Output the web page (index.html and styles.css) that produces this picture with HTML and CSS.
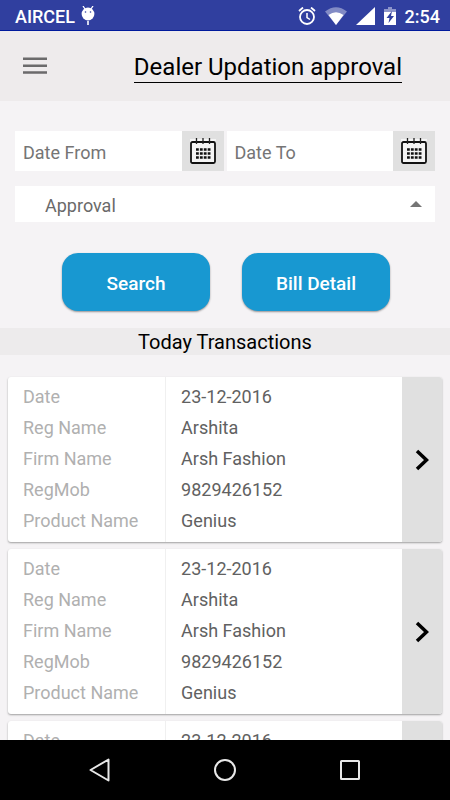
FILE: index.html
```html
<!DOCTYPE html>
<html lang="en">
  <head>
    <meta charset="utf-8" />
    <title>Dealer Updation approval</title>
    <meta name="viewport" content="width=device-width, initial-scale=1" />
    <link rel="stylesheet" href="styles.css">
  </head>
  <body>
    <div class="status-bar">
      <span class="carrier">AIRCEL</span>
      <svg class="droid" width="14" height="20" viewBox="0 0 14 20">
        <path d="M2 0l2 3M12 0l-2 3" stroke="#fff" stroke-width="1.3" />
        <ellipse cx="7" cy="8" rx="6.4" ry="6.5" fill="#fff" />
        <path d="M7 15v4" stroke="#fff" stroke-width="1.6" />
        <circle cx="4.5" cy="6" r="0.8" fill="#303f9f" />
        <circle cx="9.5" cy="6" r="0.8" fill="#303f9f" />
      </svg>
      <div class="status-icons">
        <svg width="18" height="19" viewBox="0 0 18 19" fill="none" stroke="#fff">
          <circle cx="9" cy="10" r="7" stroke-width="1.8" />
          <path d="M9 6v4.500l3 2" stroke-width="1.5" />
          <path d="M1 4l4-3.500M17 4l-4-3.500" stroke-width="1.8" />
        </svg>
        <svg width="22" height="18" viewBox="0 0 22 18" fill="#fff">
          <path d="M0 4.500Q11-4 22 4.500L11 18z" opacity="0.4" />
          <path d="M3.500 8Q11 2.500 18.500 8L11 18z" />
        </svg>
        <svg width="19" height="18" viewBox="0 0 19 18" fill="#fff">
          <path d="M19 0v18H0z" />
        </svg>
        <svg class="battery" width="12" height="18" viewBox="0 0 12 18">
          <path d="M4 0h4v2h4v4H0V2h4z" fill="#fff" opacity="0.45" />
          <path d="M0 5h12v13H0z" fill="#fff" />
          <path d="M8 4l-5.500 7h3L4.500 16l5.500-7H7z" fill="#303f9f" />
        </svg>
        <span class="clock">2:54</span>
      </div>
    </div>

    <header class="app-bar">
      <button class="menu-btn" type="button" aria-label="Menu">
        <svg width="24" height="18" viewBox="0 0 24 18" fill="#6b6a6b">
          <path d="M0 .5h24v2.500H0zM0 7.500h24V10H0zM0 14.200h24v2.500H0z" />
        </svg>
      </button>
      <h1 class="title">Dealer Updation approval</h1>
    </header>

    <main class="content">
      <form class="filters">
        <div class="dates">
          <div class="date-field">
            <input type="text" placeholder="Date From" aria-label="Date From">
            <button class="cal-btn" type="button" aria-label="Pick date from">
              <svg width="26" height="26" viewBox="0 0 26 26">
                <path d="M0 1h26v24H0z" fill="#f5f5f5" />
                <rect x="1" y="4" width="24" height="21" rx="1.5" fill="#f5f5f5" stroke="#111" stroke-width="1.8" />
                <path d="M6.500 0v6M13 0v6M19.500 0v6" stroke="#222" stroke-width="1.3" />
                <path d="M6 11.500h14.500M6 15.500h14.500M6 19.500h14.500" stroke="#111" stroke-width="2.400" stroke-dasharray="2.800 1.100" />
              </svg>
            </button>
          </div>
          <div class="date-field">
            <input type="text" placeholder="Date To" aria-label="Date To">
            <button class="cal-btn" type="button" aria-label="Pick date to">
              <svg width="26" height="26" viewBox="0 0 26 26">
                <path d="M0 1h26v24H0z" fill="#f5f5f5" />
                <rect x="1" y="4" width="24" height="21" rx="1.5" fill="#f5f5f5" stroke="#111" stroke-width="1.8" />
                <path d="M6.500 0v6M13 0v6M19.500 0v6" stroke="#222" stroke-width="1.3" />
                <path d="M6 11.500h14.500M6 15.500h14.500M6 19.500h14.500" stroke="#111" stroke-width="2.400" stroke-dasharray="2.800 1.100" />
              </svg>
            </button>
          </div>
        </div>
        <div class="select-wrap">
          <select aria-label="Status">
            <option>Approval</option>
          </select>
          <svg class="caret" width="12" height="6" viewBox="0 0 12 6"><path d="M6 0l6 6H0z" fill="#757575" /></svg>
        </div>
        <div class="actions">
          <button class="btn" type="button">Search</button>
          <button class="btn" type="button">Bill Detail</button>
        </div>
      </form>

      <h2 class="section-title">Today Transactions</h2>

      <div class="cards">
        <article class="card">
          <table class="details">
            <tr><th scope="row">Date</th><td>23-12-2016</td></tr>
            <tr><th scope="row">Reg Name</th><td>Arshita</td></tr>
            <tr><th scope="row">Firm Name</th><td>Arsh Fashion</td></tr>
            <tr><th scope="row">RegMob</th><td>9829426152</td></tr>
            <tr><th scope="row">Product Name</th><td>Genius</td></tr>
          </table>
          <button class="open-btn" type="button" aria-label="Open transaction">
            <svg width="14" height="22" viewBox="0 0 14 22" fill="none" stroke="#000" stroke-width="3.5"><path d="M2 2l9.500 9L2 20" /></svg>
          </button>
        </article>
        <article class="card">
          <table class="details">
            <tr><th scope="row">Date</th><td>23-12-2016</td></tr>
            <tr><th scope="row">Reg Name</th><td>Arshita</td></tr>
            <tr><th scope="row">Firm Name</th><td>Arsh Fashion</td></tr>
            <tr><th scope="row">RegMob</th><td>9829426152</td></tr>
            <tr><th scope="row">Product Name</th><td>Genius</td></tr>
          </table>
          <button class="open-btn" type="button" aria-label="Open transaction">
            <svg width="14" height="22" viewBox="0 0 14 22" fill="none" stroke="#000" stroke-width="3.5"><path d="M2 2l9.500 9L2 20" /></svg>
          </button>
        </article>
        <article class="card">
          <table class="details">
            <tr><th scope="row">Date</th><td>23-12-2016</td></tr>
          </table>
          <button class="open-btn" type="button" aria-label="Open transaction"></button>
        </article>
      </div>
    </main>

    <nav class="nav-bar">
      <button type="button" aria-label="Back">
        <svg width="24" height="24" viewBox="0 0 24 24" fill="none" stroke="#e8e8e8" stroke-width="2"><path d="M20.500 1.500v21L2.500 12z" stroke-linejoin="round" /></svg>
      </button>
      <button type="button" aria-label="Home">
        <svg width="24" height="24" viewBox="0 0 24 24" fill="none" stroke="#e8e8e8" stroke-width="2"><circle cx="12" cy="12" r="10" /></svg>
      </button>
      <button type="button" aria-label="Recent apps">
        <svg width="24" height="24" viewBox="0 0 24 24" fill="none" stroke="#e8e8e8" stroke-width="2"><rect x="3" y="3" width="18" height="18" rx="0.5" /></svg>
      </button>
    </nav>
  </body>
</html>
```
FILE: styles.css
```css
* {
  box-sizing: border-box;
}
body {
  margin: 0;
  height: 100vh;
  display: flex;
  flex-direction: column;
  background-color: #f5f3f5;
  font-family: Roboto, sans-serif;
  font-size: 18px;
  color: #000;
}
button {
  border: 0;
  padding: 0;
  background: none;
  font-family: inherit;
  cursor: pointer;
}
svg {
  display: block;
}

/* phone status bar */
.status-bar {
  flex: none;
  height: 31px;
  display: flex;
  align-items: center;
  gap: 6px;
  padding: 2px 10px 0 15px;
  background-color: #303f9f;
  border-bottom: 1px solid #001a9c;
  color: #fff;
  font-weight: 500;
}
.status-icons {
  display: flex;
  align-items: center;
  gap: 9px;
  margin-left: auto;
}

.app-bar {
  flex: none;
  height: 70px;
  display: flex;
  align-items: center;
  justify-content: space-between;
  padding: 0 48px 0 23px;
  background-color: #eeebec;
}
.title {
  margin: 0;
  padding-top: 2px;
  border-bottom: 1px solid #000;
  font-size: 24px;
  font-weight: 400;
  line-height: 30px;
}

.content {
  flex: 1;
  min-height: 0;
  overflow-y: auto;
  scrollbar-width: none;
}
.filters {
  padding: 30px 15px 17px;
}
.dates {
  display: flex;
  gap: 3px;
}
.date-field {
  flex: 1;
  min-width: 0;
  display: flex;
  height: 40px;
}
.date-field input {
  flex: 1;
  min-width: 0;
  border: 0;
  padding: 2px 8px 0;
  background-color: #fff;
  font: inherit;
}
.date-field input::placeholder {
  color: #757575;
}
.cal-btn {
  flex: none;
  display: flex;
  width: 42px;
  align-items: center;
  justify-content: center;
  background-color: #e0e0e0;
}
.select-wrap {
  position: relative;
  margin-top: 15px;
}
.select-wrap select {
  display: block;
  width: 100%;
  height: 36px;
  appearance: none;
  border: 0;
  border-radius: 0;
  padding: 2px 30px 0;
  background-color: #fff;
  color: #6a6a6a;
  font: inherit;
}
.caret {
  position: absolute;
  right: 13px;
  top: 15px;
  pointer-events: none;
}
.actions {
  display: flex;
  justify-content: center;
  gap: 32px;
  margin: 31px 0 0 2px;
}
.btn {
  width: 148px;
  height: 58px;
  padding-top: 2px;
  border-radius: 16px;
  background-color: #1898d1;
  box-shadow: 0 1px 2px rgba(0, 0, 0, 0.4);
  color: #fff;
  font-size: 19px;
  font-weight: 500;
}

.section-title {
  margin: 0;
  padding-top: 1px;
  background-color: #edebec;
  font-size: 20px;
  font-weight: 400;
  line-height: 26px;
  text-align: center;
}

.cards {
  display: flex;
  flex-direction: column;
  gap: 7px;
  padding: 22px 8px 8px;
}
.card {
  display: flex;
  overflow: hidden;
  flex: none;
  border-radius: 3px;
  background-color: #fff;
  box-shadow: 0 1px 2px rgba(0, 0, 0, 0.35);
}
.details {
  flex: 1;
  border-collapse: collapse;
  table-layout: fixed;
}
.details th,
.details td {
  height: 31px;
  padding: 0 15px;
  font-weight: 400;
  line-height: 31px;
  text-align: left;
}
.details th {
  width: 40%;
  border-right: 1px solid #f0f0f0;
  color: #b0b0b0;
}
.details td {
  color: #616161;
}
.details tr:first-child > * {
  padding-top: 4px;
}
.details tr:last-child > * {
  padding-bottom: 6px;
}
.open-btn {
  width: 40px;
  display: flex;
  align-items: center;
  justify-content: center;
  background-color: #e0e0e0;
}

/* phone navigation keys */
.nav-bar {
  flex: none;
  height: 60px;
  display: flex;
  align-items: center;
  justify-content: center;
  gap: 101px;
  background-color: #000;
}
```
